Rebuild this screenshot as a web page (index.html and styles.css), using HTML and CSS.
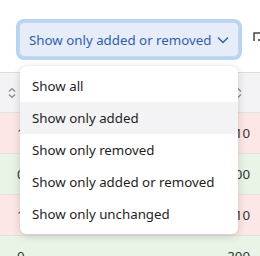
FILE: index.html
```html
<!DOCTYPE html>
<html>
<head>
<meta charset="utf-8">
<link rel="stylesheet" href="styles.css">
</head>
<body>
<div class="toolbar">
  <button class="select">
    <span class="select-label">Show only added or removed</span>
    <svg class="chev" width="12" height="8" viewBox="0 0 12 8"><path d="M1 1.5 L6 6.5 L11 1.5" fill="none" stroke="#2f5eb0" stroke-width="1.4"/></svg>
  </button>
  <svg class="tool-icon" width="10" height="12" viewBox="0 0 10 12"><path d="M1 9 V1 H10" fill="none" stroke="#444" stroke-width="1.5"/><rect x="5" y="7" width="2" height="2" fill="#666"/></svg>
</div>
<div class="table">
  <div class="row head">
    <div class="cell left"><svg width="8" height="12" viewBox="0 0 8 12"><path d="M1 4.5 L4 1.5 L7 4.5 M1 7.5 L4 10.5 L7 7.5" fill="none" stroke="#888" stroke-width="1.2"/></svg></div>
    <div class="cell right"><svg width="8" height="12" viewBox="0 0 8 12"><path d="M1 4.5 L4 1.5 L7 4.5 M1 7.5 L4 10.5 L7 7.5" fill="none" stroke="#888" stroke-width="1.2"/></svg></div>
  </div>
  <div class="row removed"><div class="cell left">1</div><div class="cell right">10</div></div>
  <div class="row added"><div class="cell left">0</div><div class="cell right">200</div></div>
  <div class="row removed"><div class="cell left">1</div><div class="cell right">10</div></div>
  <div class="row added"><div class="cell left">0</div><div class="cell right">200</div></div>
</div>
<ul class="menu">
  <li class="item">Show all</li>
  <li class="item hover">Show only added</li>
  <li class="item">Show only removed</li>
  <li class="item">Show only added or removed</li>
  <li class="item">Show only unchanged</li>
</ul>
</body>
</html>
```
FILE: styles.css
```css
html, body {
  margin: 0;
  padding: 0;
  background: #ffffff;
  width: 260px;
  height: 256px;
  overflow: hidden;
  font-family: "Noto Sans", "Open Sans", sans-serif;
  font-size: 13.3px;
  color: #222;
}
.toolbar {
  height: 72px;
  box-sizing: border-box;
  padding: 22px 0 0 19px;
  display: flex;
  align-items: flex-start;
  gap: 14px;
}
.select {
  display: flex;
  align-items: center;
  gap: 6px;
  height: 35px;
  width: 220px;
  box-sizing: border-box;
  padding: 0 9px 0 9px;
  background: #e6edf8;
  border: 1px solid #c5d6ee;
  border-radius: 5px;
  box-shadow: 0 0 0 3px #b7d5f3;
  font-family: inherit;
  font-size: 13.3px;
  color: #2f5eb0;
  white-space: nowrap;
}
.select-label {
  flex: 1;
  text-align: left;
}
.chev {
  flex: none;
}
.tool-icon {
  margin-top: 10px;
  flex: none;
}
.table {
  border-top: 1px solid #dedede;
}
.row {
  display: flex;
  justify-content: space-between;
  align-items: center;
  height: 41px;
  box-sizing: border-box;
  border-bottom: 1px solid #e2e2e2;
}
.head {
  background: #f3f3f5;
  height: 40px;
}
.removed { background: #fde6e6; }
.added { background: #e9f4e7; }
.cell {
  color: #333;
}
.cell.left {
  padding-left: 17px;
}
.head .cell.left {
  padding-left: 8px;
  display: flex;
}
.cell.right {
  padding-right: 10px;
}
.head .cell.right {
  padding-right: 18px;
  display: flex;
}
.menu {
  position: absolute;
  left: 20px;
  top: 66px;
  width: 218px;
  margin: 0;
  padding: 4px 0;
  list-style: none;
  background: #fff;
  border-radius: 6px;
  box-shadow: 0 2px 8px rgba(0,0,0,0.16), 0 0 1px rgba(0,0,0,0.12);
}
.item {
  height: 32px;
  line-height: 32px;
  padding-left: 12px;
  color: #1e1e1e;
  white-space: nowrap;
}
.item.hover {
  background: #f3f3f5;
}
```
